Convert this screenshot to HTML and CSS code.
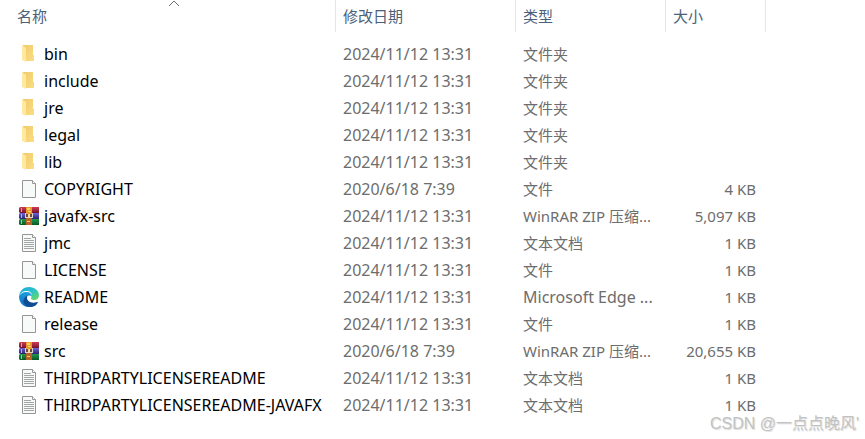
FILE: index.html
```html
<!DOCTYPE html>
<html lang="zh-CN">
<head>
    <meta charset="UTF-8">
    <meta name="viewport" content="width=device-width, initial-scale=1.0">
    <title>文件列表</title>
    <link rel="stylesheet" href="styles.css">
</head>
<body>
    <!-- Icon shapes shared by the rows -->
    <svg class="sprite" aria-hidden="true">
        <defs>
            <linearGradient id="folderBack" x1="0" x2="1" y1="0" y2="1">
                <stop offset="0" stop-color="#f0cb6a"/>
                <stop offset="1" stop-color="#fbdd83"/>
            </linearGradient>
            <linearGradient id="redBook" x1="0" x2="0" y1="0" y2="1">
                <stop offset="0" stop-color="#cf3c50"/>
                <stop offset="1" stop-color="#74122c"/>
            </linearGradient>
            <linearGradient id="blueBook" x1="0" x2="0" y1="0" y2="1">
                <stop offset="0" stop-color="#6d63d8"/>
                <stop offset="1" stop-color="#29236f"/>
            </linearGradient>
            <linearGradient id="greenBook" x1="0" x2="0" y1="0" y2="1">
                <stop offset="0" stop-color="#23974d"/>
                <stop offset="1" stop-color="#085724"/>
            </linearGradient>
            <linearGradient id="edgeTop" x1="0" x2="1" y1="0" y2="1">
                <stop offset="0" stop-color="#1ba5df"/>
                <stop offset="0.5" stop-color="#2cc3c9"/>
                <stop offset="1" stop-color="#70de4b"/>
            </linearGradient>
            <linearGradient id="edgeLeft" x1="0" x2="0" y1="0" y2="1">
                <stop offset="0" stop-color="#1c9fde"/>
                <stop offset="1" stop-color="#0f68bd"/>
            </linearGradient>
        </defs>
        <symbol id="folder" viewBox="0 0 20 20">
            <path fill="url(#folderBack)" d="M4 1h10v10h1v6H5z"/>
            <path fill="#ffe8a0" d="M3 1l4 3v14L3 16z"/>
        </symbol>
        <symbol id="file" viewBox="0 0 20 20">
            <path fill="#f8f9f9" stroke="#949694" d="M3.500 1.500h10l3 3v14h-13z"/>
            <path fill="#fff" stroke="#949694" d="M13.500 1.500v3h3"/>
        </symbol>
        <symbol id="text" viewBox="0 0 20 20">
            <path fill="#f8f9f9" stroke="#949694" d="M3.500 1.500h10l3 3v14h-13z"/>
            <path fill="#fff" stroke="#949694" d="M13.500 1.500v3h3"/>
            <path stroke="#a4a6a6" d="M5 5.500h7M5 7.500h10M5 9.500h10M5 11.500h10M5 13.500h10M5 15.500h10"/>
        </symbol>
        <symbol id="rar" viewBox="0 0 20 20">
            <path fill="url(#redBook)" d="M1 1h19v6H1L0 6V2z"/>
            <path fill="url(#blueBook)" d="M1 7h19v6H1l-1-1V8z"/>
            <path fill="url(#greenBook)" d="M1 13h19v6H1l-1-1v-4z"/>
            <path fill="#eab632" d="M2 2h1v4H2zM2 8h1v4H2zM2 14h1v4H2z"/>
            <path fill="#e99831" d="M7 1h6v7H7z"/>
            <path fill="#b8632a" d="M7 12h6v7H7z"/>
            <path fill="#ffd35a" d="M8 2h3v2H8zM9 5h3v1H9zM8 15h3v1H8z"/>
            <path fill="#6b4a3c" d="M7 8h6v4H7z"/>
            <path fill="#d8d4d2" d="M6 7h1v5H6zM13 7h1v5h-1zM7 11h2v1H7zM11 11h2v1h-2z"/>
            <path fill="#f5d6a0" d="M9 8h2v4H9z"/>
        </symbol>
        <symbol id="edge" viewBox="0 0 20 20">
            <path fill="url(#edgeTop)" d="M0 9C1 3 5 0 10 0c6 0 10 4 10 8 0 3-2 5-5 5-2 0-3-1-3-2l1-2c0-3-2-5-6-5-3 0-6 2-7 5z"/>
            <path fill="url(#edgeLeft)" d="M0 9c1-2 4-4 7-4 4 0 6 2 6 5-1-2-4-2-5 0-1 4 2 7 5 9-7 3-13-2-13-10z"/>
            <path fill="#114b91" d="M8 9c-1 5 4 8 10 6l1 0c-1 3-4 5-8 5-5-1-8-5-6-8 1-2 2-3 3-3z"/>
        </symbol>
    </svg>

    <table class="file-list">
        <colgroup>
            <col class="col-name">
            <col class="col-date">
            <col class="col-type">
            <col class="col-size">
            <col>
        </colgroup>
        <thead>
            <tr>
                <th aria-sort="ascending">
                    <button type="button">名称</button>
                    <svg class="sort-arrow" viewBox="0 0 12 7"><path d="M1 6l5-5 5 5"/></svg>
                </th>
                <th><button type="button">修改日期</button></th>
                <th><button type="button">类型</button></th>
                <th><button type="button">大小</button></th>
                <td></td>
            </tr>
        </thead>
        <tbody>
            <tr>
                <td class="name"><div><svg><use href="#folder"/></svg>bin</div></td>
                <td class="date">2024/11/12 13:31</td><td>文件夹</td><td class="size"></td><td></td>
            </tr>
            <tr>
                <td class="name"><div><svg><use href="#folder"/></svg>include</div></td>
                <td class="date">2024/11/12 13:31</td><td>文件夹</td><td class="size"></td><td></td>
            </tr>
            <tr>
                <td class="name"><div><svg><use href="#folder"/></svg>jre</div></td>
                <td class="date">2024/11/12 13:31</td><td>文件夹</td><td class="size"></td><td></td>
            </tr>
            <tr>
                <td class="name"><div><svg><use href="#folder"/></svg>legal</div></td>
                <td class="date">2024/11/12 13:31</td><td>文件夹</td><td class="size"></td><td></td>
            </tr>
            <tr>
                <td class="name"><div><svg><use href="#folder"/></svg>lib</div></td>
                <td class="date">2024/11/12 13:31</td><td>文件夹</td><td class="size"></td><td></td>
            </tr>
            <tr>
                <td class="name"><div><svg><use href="#file"/></svg>COPYRIGHT</div></td>
                <td class="date">2020/6/18 7:39</td><td>文件</td><td class="size">4 KB</td><td></td>
            </tr>
            <tr>
                <td class="name"><div><svg><use href="#rar"/></svg>javafx-src</div></td>
                <td class="date">2024/11/12 13:31</td><td>WinRAR ZIP 压缩...</td><td class="size">5,097 KB</td><td></td>
            </tr>
            <tr>
                <td class="name"><div><svg><use href="#text"/></svg>jmc</div></td>
                <td class="date">2024/11/12 13:31</td><td>文本文档</td><td class="size">1 KB</td><td></td>
            </tr>
            <tr>
                <td class="name"><div><svg><use href="#file"/></svg>LICENSE</div></td>
                <td class="date">2024/11/12 13:31</td><td>文件</td><td class="size">1 KB</td><td></td>
            </tr>
            <tr>
                <td class="name"><div><svg><use href="#edge"/></svg>README</div></td>
                <td class="date">2024/11/12 13:31</td><td class="latin">Microsoft Edge ...</td><td class="size">1 KB</td><td></td>
            </tr>
            <tr>
                <td class="name"><div><svg><use href="#file"/></svg>release</div></td>
                <td class="date">2024/11/12 13:31</td><td>文件</td><td class="size">1 KB</td><td></td>
            </tr>
            <tr>
                <td class="name"><div><svg><use href="#rar"/></svg>src</div></td>
                <td class="date">2020/6/18 7:39</td><td>WinRAR ZIP 压缩...</td><td class="size">20,655 KB</td><td></td>
            </tr>
            <tr>
                <td class="name"><div><svg><use href="#text"/></svg>THIRDPARTYLICENSEREADME</div></td>
                <td class="date">2024/11/12 13:31</td><td>文本文档</td><td class="size">1 KB</td><td></td>
            </tr>
            <tr>
                <td class="name"><div><svg><use href="#text"/></svg>THIRDPARTYLICENSEREADME-JAVAFX</div></td>
                <td class="date">2024/11/12 13:31</td><td>文本文档</td><td class="size">1 KB</td><td></td>
            </tr>
        </tbody>
    </table>

    <div class="watermark">CSDN @一点点晚风'</div>
</body>
</html>
```
FILE: styles.css
```css
body {
    position: relative;
    min-height: 100vh;
    margin: 0;
    background-color: #fff;
    color: #6d6d6d;
    font-family: "Noto Sans", "Noto Sans CJK SC", sans-serif;
    font-size: 15px;
    line-height: 20px;
}
.sprite {
    position: absolute;
    width: 0;
    height: 0;
}
.file-list {
    width: 100%;
    table-layout: fixed;
    border-collapse: separate;
    border-spacing: 0;
}
.col-name {
    width: 336px;
}
.col-date {
    width: 180px;
}
.col-type {
    width: 150px;
}
.col-size {
    width: 100px;
}
th {
    position: relative;
    height: 32px;
    padding: 0 7px;
    border-right: 1px solid #e5e5e5;
    text-align: left;
}
th:first-child {
    padding-left: 17px;
}
th button {
    padding: 0;
    border: none;
    background: none;
    color: #4c607a;
    font: inherit;
    font-weight: normal;
    cursor: pointer;
}
.sort-arrow {
    position: absolute;
    top: 0;
    left: 50%;
    width: 12px;
    height: 7px;
    fill: none;
    stroke: #6d6d6d;
}
/* space between the header and the first row */
tbody::before {
    content: "";
    display: table-row;
    height: 9px;
}
tbody td {
    height: 25px;
    padding: 0 7px 2px;
    white-space: nowrap;
}
tbody .name {
    padding-left: 19px;
    padding-right: 0;
    color: #000;
}
tbody .name,
tbody .date,
tbody .latin {
    font-size: 16px;
}
.name div {
    display: flex;
    align-items: center;
    gap: 5px;
}
.name svg {
    flex: none;
    width: 20px;
    height: 20px;
}
tbody .size {
    padding-right: 10px;
    text-align: right;
}
.watermark {
    position: absolute;
    right: 6px;
    bottom: 5px;
    color: #c2c2c2;
    font-family: "Liberation Sans", "Noto Sans CJK SC", sans-serif;
    font-size: 16px;
    text-shadow: 1px 1px 1px #ddd;
}
```
